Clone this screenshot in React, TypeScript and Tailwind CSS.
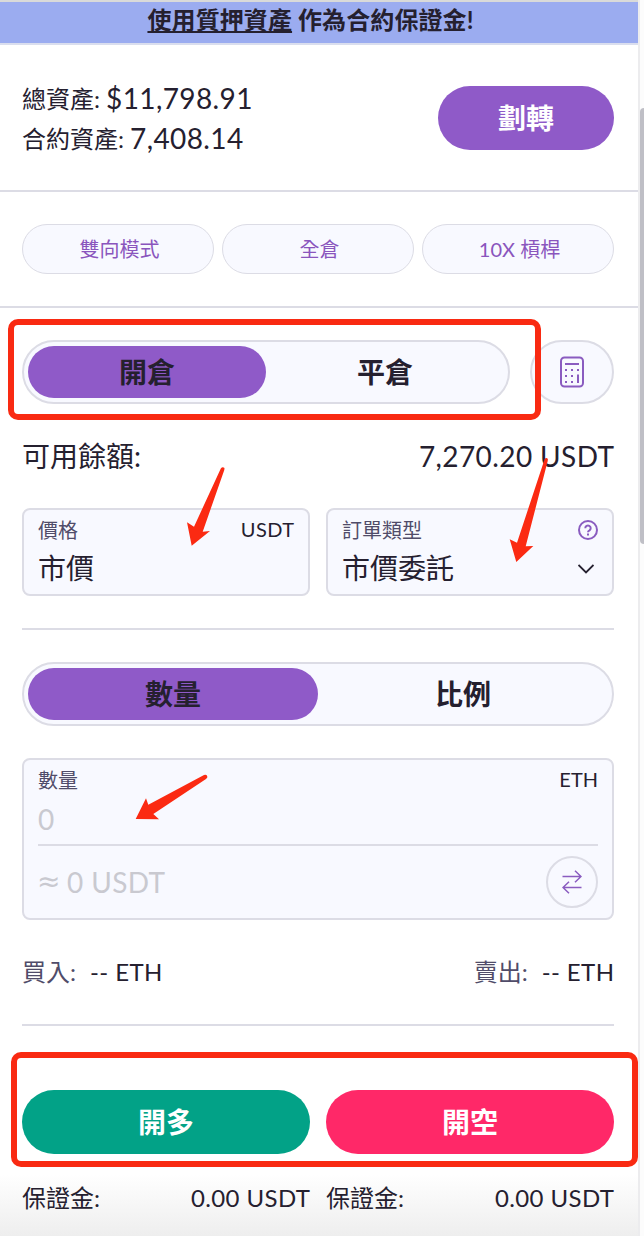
import React from "react";

const font = "font-['Lato','Noto_Sans_CJK_TC',sans-serif]";

function T({ children, className = "" }: { children: React.ReactNode; className?: string }) {
  return <span className={"block whitespace-nowrap " + className}>{children}</span>;
}

function Num({ children, className = "" }: { children: React.ReactNode; className?: string }) {
  return <span className={"-mr-[0.4px] block tracking-[0.4px] whitespace-nowrap " + className}>{children}</span>;
}

function Segmented({ left, right, className }: { left: string; right: string; className: string }) {
  return (
    <div className={"flex h-16 shrink-0 rounded-full border-2 border-[#dcdce5] bg-[#f8f9ff] p-1 text-[28px] font-bold " + className}>
      <div className="flex flex-1 items-center justify-center rounded-full bg-[#8f5ac8]">{left}</div>
      <div className="flex flex-1 items-center justify-center">{right}</div>
    </div>
  );
}

function ModeButton({ children }: { children: React.ReactNode }) {
  return (
    <button className="h-[50px] flex-1 rounded-full border border-[#dcdce5] bg-[#f8f9ff] pl-[3px]">{children}</button>
  );
}

function Calculator() {
  return (
    <svg width="24" height="32" viewBox="0 0 24 32" fill="none" stroke="#8a5cc0" strokeWidth="2">
      <rect x="1" y="1.5" width="22" height="29" rx="3.5" />
      <path d="M5 8H19" />
      <path d="M5 14h2m4 0h2m4 0h2M5 20h2m4 0h2m4 0h2M5 26h2m4 0h2" strokeWidth="2.2" />
      <path d="M18 18.500v8.500" />
    </svg>
  );
}

function Arrow({ className, viewBox, d }: { className: string; viewBox: string; d: string }) {
  return (
    <svg className={"pointer-events-none absolute " + className} viewBox={viewBox} fill="#fb2a12">
      <path d={d} />
    </svg>
  );
}

function Order({ label, color }: { label: string; color: string }) {
  return (
    <div className="flex-1">
      <button className={"block h-16 w-full rounded-full text-[28px] font-bold text-white " + color}>{label}</button>
      <div className="flex h-[88px] items-center justify-between text-2xl">
        <T>保證金:</T>
        <Num>0.00 USDT</Num>
      </div>
    </div>
  );
}

export default function App() {
  return (
    <div lang="zh-Hant" className={"relative flex h-[1236px] w-[644px] overflow-hidden bg-white text-[#25202f] " + font}>
      <main className="flex h-[1236px] w-[638px] flex-col overflow-hidden bg-gradient-to-b from-white from-[95%] to-[#eeeeee]">
        <div className="flex h-[45px] shrink-0 items-center justify-center border-t-2 border-b-2 border-t-[#d9dad9] border-b-[#dadeee] bg-[#9bacf0] pr-[17px] text-2xl font-bold">
          <T className="relative -top-[3px] tracking-[0.1px]">
            <span className="underline decoration-2 underline-offset-2">使用質押資產</span> 作為合約保證金!
          </T>
        </div>

        <section className="flex h-[147px] shrink-0 items-center justify-between border-b-2 border-[#dcdce5] pr-6 pl-[22px]">
          <div className="flex flex-col pt-[3px] text-2xl">
            <div className="flex h-10 items-center gap-1.5"><T>總資產:</T><Num className="text-[28px]">$11,798.91</Num></div>
            <div className="flex h-10 items-center gap-1.5"><T>合約資產:</T><Num className="text-[28px]">7,408.14</Num></div>
          </div>
          <button className="h-16 w-44 rounded-full bg-[#8f5ac8] text-[28px] font-bold text-white">劃轉</button>
        </section>

        <section className="flex h-[116px] shrink-0 items-center gap-2 border-b-2 border-[#dcdce5] pr-6 pl-[22px] text-xl text-[#8a55bd]">
          <ModeButton>雙向模式</ModeButton>
          <ModeButton>全倉</ModeButton>
          <ModeButton>10X 槓桿</ModeButton>
        </section>

        <section className="flex shrink-0 flex-col pt-8 pr-6 pl-[22px]">
          <div className="flex justify-between">
            <Segmented left="開倉" right="平倉" className="w-[488px]" />
            <button className="flex h-16 w-[84px] items-center justify-center rounded-full border-2 border-[#dcdce5] bg-[#f8f9ff]">
              <Calculator />
            </button>
          </div>

          <div className="flex h-[104px] items-center justify-between text-[28px]">
            <T>可用餘額:</T>
            <Num>7,270.20 USDT</Num>
          </div>

          <div className="flex gap-4">
            <div className="h-[88px] flex-1 rounded-lg border-2 border-[#dcdce5] bg-[#f8f9ff] px-3.5">
              <div className="flex h-10 items-center justify-between text-xl"><T className="text-[#504c69]">價格</T><Num className="pb-0.5">USDT</Num></div>
              <div className="flex h-9 items-center text-[28px]"><T>市價</T></div>
            </div>
            <div className="h-[88px] flex-1 rounded-lg border-2 border-[#dcdce5] bg-[#f8f9ff] px-3.5">
              <div className="flex h-10 items-center justify-between text-xl">
                <T className="text-[#504c69]">訂單類型</T>
                <svg width="20" height="20" viewBox="0 0 20 20" fill="none" stroke="#8a5cc0" strokeWidth="2">
                  <circle cx="10" cy="10" r="9" />
                  <path d="M7.300 8.200a2.700 2.700 0 1 1 4.200 2.200Q10 11.200 10 12.200M10 13.600v1.800" />
                </svg>
              </div>
              <div className="flex h-9 items-center justify-between pr-1 text-[28px]">
                <T>市價委託</T>
                <svg className="relative top-px" width="16" height="10" viewBox="0 0 16 10" fill="none" stroke="#25202f" strokeWidth="1.8"><path d="M.5 1 8 8.500 15.500 1" /></svg>
              </div>
            </div>
          </div>

          <div className="mt-8 h-0.5 shrink-0 bg-[#dcdce5]" />

          <Segmented left="數量" right="比例" className="mt-8" />

          <div className="mt-8 h-[162px] rounded-lg border-2 border-[#dcdce5] bg-[#f8f9ff] px-3.5">
            <div className="flex h-10 items-center justify-between text-xl"><T className="text-[#504c69]">數量</T><T className="pb-0.5">ETH</T></div>
            <div className="flex h-11 items-start text-[28px] leading-[38px] text-[#c9c9d0]"><T>0</T></div>
            <div className="h-0.5 bg-[#dcdce5]" />
            <div className="flex h-[72px] items-center justify-between text-[28px] text-[#c9c9d0]">
              <div className="flex items-center">
                <span className="-ml-px block w-[30px] font-['DejaVu_Sans',sans-serif] leading-10 font-normal">≈</span>
                <Num>0 USDT</Num>
              </div>
              <button className="flex size-[52px] items-center justify-center rounded-full border-2 border-[#dcdce5]">
                <svg width="20" height="24" viewBox="0 0 20 24" fill="none" stroke="#8a5cc0" strokeWidth="1.5"><path d="M.5 6.500H19M13 .7l6 5.800-6 5.800M19.500 17.500H1M7 11.700l-6 5.800 6 5.800" /></svg>
              </button>
            </div>
          </div>

          <div className="flex h-[104px] items-center justify-between text-2xl">
            <div className="flex gap-3.5"><T className="text-[#504c69]">買入:</T><Num>-- ETH</Num></div>
            <div className="flex gap-3.5"><T className="text-[#504c69]">賣出:</T><Num>-- ETH</Num></div>
          </div>
          <div className="h-0.5 shrink-0 bg-[#dcdce5]" />

          <div className="mt-16 flex gap-4">
            <Order label="開多" color="bg-[#02a287]" />
            <Order label="開空" color="bg-[#ff2868]" />
          </div>
        </section>
      </main>

      <aside className="w-1.5 border-l-2 border-[#ececee] bg-[#fcfcfc] pt-[108px]">
        <div className="h-[436px] w-1 rounded-l-sm bg-[#bfbfc6]" />
      </aside>

      <div className="pointer-events-none absolute top-[319px] left-2 h-[101px] w-[533px] rounded-[10px] border-[6px] border-[#f92a12]" />
      <div className="pointer-events-none absolute top-[1052px] left-[11px] h-[115px] w-[627px] rounded-[10px] border-[6px] border-[#f92a12]" />
      <Arrow
        className="top-[466px] left-[186px] h-[82px] w-[42px]"
        viewBox="186 466 42 82"
        d="M220.800 468.500Q222.500 466.300 224.500 468L224.300 470 202.700 531.700 210 531 191.700 545.700 187 522.300 194 526.700Z"
      />
      <Arrow
        className="top-[456px] left-[508px] h-[108px] w-[42px]"
        viewBox="508 456 42 108"
        d="M544.500 459.500Q546 457 547.900 459L547.700 461 525.700 546.300 533.300 546 516.300 562 509.700 539.300 517 542.700Z"
      />
      <Arrow
        className="top-[772px] left-[134px] h-[50px] w-[76px]"
        viewBox="134 772 76 50"
        d="M204 775Q207.500 774 207.300 777.500L206 779 153.300 814 159 819.300 135.700 819 146 798.300 148.300 804.700Z"
      />
    </div>
  );
}
